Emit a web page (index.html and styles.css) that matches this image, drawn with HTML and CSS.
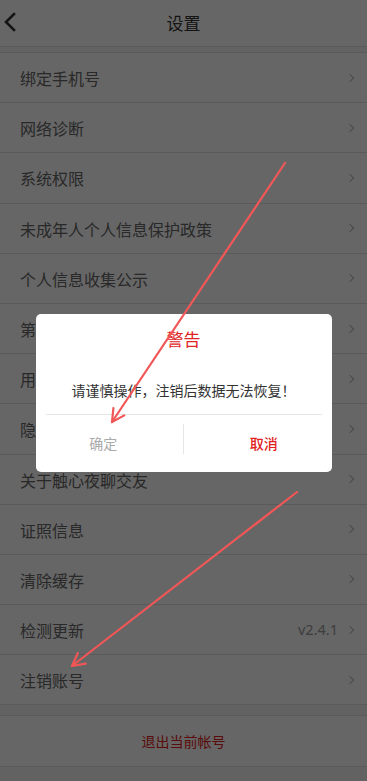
FILE: index.html
```html
<!DOCTYPE html>
<html lang="zh-CN">
<head>
<meta charset="utf-8">
<title>设置</title>
<link rel="stylesheet" href="styles.css">
</head>
<body>
<div class="page">
  <header class="topbar">
    <span class="back">
      <svg width="14" height="20" viewBox="0 0 14 20"><polyline points="11,2 3,10 11,18" fill="none" stroke="#333" stroke-width="2.6" stroke-linecap="square"/></svg>
    </span>
    <h1 class="title">设置</h1>
  </header>
  <ul class="list">
    <li class="row"><span class="label">绑定手机号</span><span class="chev"></span></li>
    <li class="row"><span class="label">网络诊断</span><span class="chev"></span></li>
    <li class="row"><span class="label">系统权限</span><span class="chev"></span></li>
    <li class="row"><span class="label">未成年人个人信息保护政策</span><span class="chev"></span></li>
    <li class="row"><span class="label">个人信息收集公示</span><span class="chev"></span></li>
    <li class="row"><span class="label">第三方信息共享清单</span><span class="chev"></span></li>
    <li class="row"><span class="label">用户协议</span><span class="chev"></span></li>
    <li class="row"><span class="label">隐私政策</span><span class="chev"></span></li>
    <li class="row"><span class="label">关于触心夜聊交友</span><span class="chev"></span></li>
    <li class="row"><span class="label">证照信息</span><span class="chev"></span></li>
    <li class="row"><span class="label">清除缓存</span><span class="chev"></span></li>
    <li class="row"><span class="label">检测更新</span><span class="value">v2.4.1</span><span class="chev"></span></li>
    <li class="row"><span class="label">注销账号</span><span class="chev"></span></li>
  </ul>
  <div class="logout">退出当前帐号</div>
</div>

<div class="mask">
  <div class="dialog">
    <div class="d-title">警告</div>
    <div class="d-msg">请谨慎操作，注销后数据无法恢复！</div>
    <div class="d-actions">
      <button class="btn btn-ok">确定</button>
      <span class="vsep"></span>
      <button class="btn btn-cancel">取消</button>
    </div>
  </div>
</div>

<svg class="notes" width="367" height="781" viewBox="0 0 367 781">
  <g fill="none" stroke="#f25656" stroke-width="2.2" stroke-linecap="round" stroke-linejoin="round">
    <line x1="285" y1="163" x2="112" y2="422"/>
    <polyline points="124.3,415.4 112,422 113.4,408.1"/>
    <line x1="297" y1="492" x2="72" y2="666"/>
    <polyline points="85.8,663.6 72,666 77.8,653.2"/>
  </g>
</svg>
</body>
</html>
```

FILE: styles.css
```css
* { box-sizing: border-box; margin: 0; padding: 0; }
html, body { width: 367px; height: 781px; overflow: hidden; }
body {
  font-family: "Noto Sans CJK SC", "Noto Sans", sans-serif;
  background: #f5f5f5;
  position: relative;
}
.page { display: flex; flex-direction: column; }
.topbar {
  height: 47px;
  background: #fff;
  border-bottom: 1px solid #e0e0e0;
  display: flex;
  align-items: center;
  justify-content: center;
  position: relative;
}
.back {
  position: absolute;
  left: 3px;
  top: 12px;
  display: flex;
}
.title {
  font-size: 17px;
  font-weight: 400;
  color: #333;
  line-height: 1;
  margin-top: -2px;
}
.list {
  list-style: none;
  margin-top: 5px;
  background: #fff;
  border-top: 1px solid #e0e0e0;
}
.row {
  height: 50.2px;
  border-bottom: 1px solid #e0e0e0;
  display: flex;
  align-items: center;
  padding: 0 12px 0 20px;
}
.label {
  flex: 1;
  font-size: 16px;
  color: #666;
  line-height: 1;
  padding-top: 1px;
}
.value {
  font-family: "Noto Sans", sans-serif;
  font-size: 14.5px;
  color: #999;
  margin-right: 9px;
  line-height: 1;
}
.chev {
  width: 6px;
  height: 6px;
  border-top: 1px solid #b9b9b9;
  border-right: 1px solid #b9b9b9;
  transform: rotate(45deg);
  margin-right: 2px;
}
.logout {
  margin-top: 10px;
  height: 52px;
  background: #fff;
  border-top: 1px solid #e0e0e0;
  border-bottom: 1px solid #e0e0e0;
  display: flex;
  align-items: center;
  justify-content: center;
  font-size: 14px;
  color: #e02020;
}
.mask {
  position: fixed;
  inset: 0;
  background: rgba(0, 0, 0, 0.6);
  display: flex;
  justify-content: center;
  align-items: flex-start;
  padding-top: 314px;
}
.dialog {
  width: 296px;
  height: 158px;
  background: #fff;
  border-radius: 5px;
  display: flex;
  flex-direction: column;
  align-items: stretch;
}
.d-title {
  text-align: center;
  font-size: 17px;
  color: #e02424;
  line-height: 1;
  padding-top: 16px;
  height: 55px;
}
.d-msg {
  text-align: center;
  font-size: 14px;
  color: #333;
  line-height: 1;
  height: 46px;
  margin: 0 10px;
  border-bottom: 1px solid #e6e6e6;
  padding-top: 14px;
}
.d-actions {
  flex: 1;
  display: flex;
  align-items: center;
}
.btn {
  flex: 1;
  border: 0;
  background: transparent;
  font-family: "Noto Sans CJK SC", sans-serif;
  font-size: 14px;
  line-height: 1;
  height: 100%;
  padding-bottom: 2px;
}
.btn-ok { color: #aaa; padding-right: 12px; }
.btn-cancel { color: #e02020; font-weight: 500; padding-left: 12px; }
.vsep {
  width: 1px;
  height: 30px;
  background: #e6e6e6;
  margin-bottom: 10px;
}
.notes {
  position: fixed;
  left: 0;
  top: 0;
  pointer-events: none;
}
```
